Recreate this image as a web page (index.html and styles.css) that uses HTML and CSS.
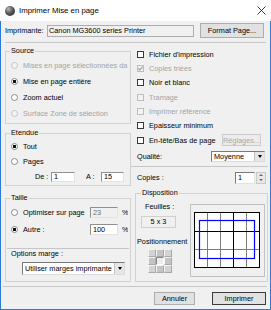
FILE: index.html
```html
<!DOCTYPE html>
<html lang="fr">
<head>
    <meta charset="UTF-8">
    <title>Imprimer Mise en page</title>
    <link rel="stylesheet" href="styles.css">
</head>
<body>
    <div class="window">
        <div class="titlebar">
            <span class="app-icon"></span>
            <span class="title">Imprimer Mise en page</span>
            <svg class="close" width="9" height="9" viewBox="0 0 9 9">
                <path d="M0.5 0.5 L8.5 8.5 M8.5 0.5 L0.5 8.5" stroke="#222" stroke-width="0.9" fill="none"/>
            </svg>
        </div>

        <div class="content">
            <div class="printer-row">
                <span class="printer-label">Imprimante:</span>
                <div class="field printer-name">Canon MG3600 series Printer</div>
                <button class="btn format-btn">Format Page...</button>
            </div>

            <div class="sep top-sep"></div>

            <div class="main">
                <div class="col-left">
                    <fieldset class="group source">
                        <legend>Source</legend>
                        <div class="opt disabled"><span class="radio"></span>Mises en page sélectionnées da</div>
                        <div class="opt"><span class="radio on"></span>Mise en page entière</div>
                        <div class="opt"><span class="radio"></span>Zoom actuel</div>
                        <div class="opt disabled"><span class="radio"></span>Surface Zone de sélection</div>
                    </fieldset>

                    <fieldset class="group range">
                        <legend>Etendue</legend>
                        <div class="opt"><span class="radio on"></span>Tout</div>
                        <div class="opt"><span class="radio"></span>Pages</div>
                        <div class="range-row">
                            <span class="range-label">De :</span>
                            <div class="field input from-input">1</div>
                            <span class="range-label to-label">A :</span>
                            <div class="field input to-input">15</div>
                        </div>
                    </fieldset>

                    <fieldset class="group size">
                        <legend>Taille</legend>
                        <div class="opt size-row">
                            <span class="radio"></span>
                            <span class="size-label">Optimiser sur page</span>
                            <div class="field input pct-input disabled-input">23</div>
                            <span class="pct">%</span>
                        </div>
                        <div class="opt size-row">
                            <span class="radio on"></span>
                            <span class="size-label">Autre :</span>
                            <div class="field input pct-input">100</div>
                            <span class="pct">%</span>
                        </div>
                        <div class="sep inner-sep"></div>
                        <div class="margin-label">Options marge :</div>
                        <div class="dropdown margin-select">
                            <span class="dropdown-text">Utiliser marges imprimante</span>
                            <span class="dropdown-btn"><span class="arrow-down"></span></span>
                        </div>
                    </fieldset>
                </div>

                <div class="col-right">
                    <div class="check-row"><span class="check"></span>Fichier d'impression</div>
                    <div class="check-row disabled">
                        <span class="check">
                            <svg width="5" height="5" viewBox="0 0 5 5"><path d="M0.3 2.4 L1.8 3.9 L4.7 0.8" stroke="#9a9a9a" stroke-width="1.1" fill="none"/></svg>
                        </span>
                        <span>Copies triées</span>
                    </div>
                    <div class="check-row"><span class="check"></span>Noir et blanc</div>
                    <div class="check-row disabled"><span class="check"></span>Tramage</div>
                    <div class="check-row disabled"><span class="check"></span>Imprimer référence</div>
                    <div class="check-row"><span class="check"></span>Epaisseur minimum</div>
                    <div class="check-row">
                        <span class="check"></span>En-tête/Bas de page
                        <button class="btn settings-btn" disabled>Réglages...</button>
                    </div>

                    <div class="quality-row">
                        <span>Qualité:</span>
                        <div class="dropdown quality-select">
                            <span class="dropdown-text">Moyenne</span>
                            <span class="dropdown-btn"><span class="arrow-down"></span></span>
                        </div>
                    </div>

                    <div class="sep right-sep"></div>

                    <div class="copies-row">
                        <span>Copies :</span>
                        <div class="spin">
                            <div class="spin-value">1</div>
                            <div class="spin-btns">
                                <span class="spin-half"><span class="arrow-up"></span></span>
                                <span class="spin-half"><span class="arrow-down small"></span></span>
                            </div>
                        </div>
                    </div>

                    <fieldset class="group disposition">
                        <legend>Disposition</legend>
                        <div class="dispo-body">
                            <div class="dispo-left">
                                <div class="sheets-label">Feuilles :</div>
                                <div class="sheets-box">5 x 3</div>
                                <div class="pos-label">Positionnement</div>
                                <div class="pos-grid">
                                    <span></span><span class="mid"></span><span></span>
                                    <span class="mid"></span><span class="center"></span><span class="mid"></span>
                                    <span></span><span class="mid"></span><span></span>
                                </div>
                            </div>
                            <div class="preview">
                                <svg width="66" height="56" viewBox="0 0 66 56">
                                    <rect x="0" y="0" width="66" height="56" fill="#fff"/>
                                    <path d="M13.5 0 V56 M26.5 0 V56 M52.5 0 V56 M0 37.5 H66" stroke="#7c7c7c" stroke-width="1"/>
                                    <path d="M39.5 0 V56 M0 19.5 H66" stroke="#000" stroke-width="1"/>
                                    <rect x="5.5" y="8.5" width="55" height="38" fill="none" stroke="#0000ff" stroke-width="1.2"/>
                                    <rect x="0.5" y="0.5" width="65" height="55" fill="none" stroke="#000" stroke-width="1"/>
                                </svg>
                            </div>
                        </div>
                    </fieldset>
                </div>
            </div>

            <div class="sep bottom-sep"></div>

            <div class="actions">
                <button class="btn cancel-btn">Annuler</button>
                <button class="btn print-btn">Imprimer</button>
            </div>
        </div>
    </div>
</body>
</html>
```

FILE: styles.css
```css
* {
    box-sizing: border-box;
}
body {
    margin: 0;
    font-family: "Liberation Sans", Arial, sans-serif;
    font-size: 7.3px;
    color: #000;
}
.window {
    width: 271px;
    height: 310px;
    background-color: #f0f0f0;
    border: 1px solid #2b7bd6;
    border-top: none;
    display: flex;
    flex-direction: column;
}
.titlebar {
    height: 21px;
    margin: 0 -1px;
    background-color: #fff;
    display: flex;
    align-items: center;
    padding: 0 5px;
}
.app-icon {
    width: 10px;
    height: 10px;
    border-radius: 50%;
    background: radial-gradient(circle at 35% 30%, #b8b8b8 0, #5a5a5a 45%, #1e1e1e 100%);
    margin-right: 4px;
}
.title {
    font-size: 7.8px;
}
.close {
    margin-left: auto;
}
.content {
    flex: 1;
    display: flex;
    flex-direction: column;
}
.printer-row {
    display: flex;
    align-items: center;
    height: 15px;
    margin: 2px 0 0 4px;
}
.printer-label {
    width: 42px;
}
.field {
    background-color: #fff;
    border: 1px solid;
    border-color: #8f8f8f #e3e3e3 #e3e3e3 #8f8f8f;
    white-space: nowrap;
    overflow: hidden;
}
.printer-name {
    width: 147px;
    height: 12px;
    line-height: 10px;
    padding-left: 1px;
    background-color: #f0f0f0;
    border-color: #adadad;
}
.btn {
    font-family: inherit;
    font-size: inherit;
    color: #000;
    background-color: #e1e1e1;
    border: 1px solid #adadad;
    padding: 0;
    border-radius: 0;
}
.format-btn {
    width: 64px;
    height: 15px;
    margin-left: 6px;
}
.sep {
    height: 0;
    border-top: 1px solid #c6c6c6;
}
.top-sep {
    margin: 4px 4px 0 4px;
}
.main {
    display: grid;
    grid-template-columns: 126px 133px;
    column-gap: 4px;
    margin: 3px 0 0 4px;
}
.col-left {
    display: flex;
    flex-direction: column;
}
.group {
    margin: 0;
    padding: 0 2px 0 5px;
    border: 1px solid #d2d2d2;
    min-width: 0;
}
.group legend {
    padding: 0 1px;
    margin-left: -1px;
    line-height: 10px;
    height: 10px;
}
.opt {
    display: flex;
    align-items: center;
    white-space: nowrap;
    overflow: hidden;
}
.radio {
    flex: none;
    width: 7px;
    height: 7px;
    border-radius: 50%;
    border: 1px solid #8a8a8a;
    background-color: #fff;
    margin-right: 5px;
}
.radio.on {
    background: radial-gradient(circle, #111 0, #111 1.4px, #fff 1.9px);
}
.disabled {
    color: #a3a3a3;
}
.disabled .radio {
    border-color: #c4c4c4;
    background-color: #f4f4f4;
}
.source {
    padding-top: 1px;
    padding-bottom: 2px;
}
.source .opt {
    height: 16px;
}
.range {
    margin-top: 4px;
    padding-top: 1px;
    padding-bottom: 1px;
}
.range .opt {
    height: 15px;
}
.range-row {
    display: flex;
    align-items: center;
    height: 15px;
    padding-left: 24px;
}
.range-label {
    width: 16px;
}
.to-label {
    margin-left: 11px;
    width: 15px;
}
.input {
    height: 10px;
    line-height: 8px;
    padding-left: 2px;
}
.from-input {
    width: 24px;
}
.to-input {
    width: 23px;
}
.size {
    margin-top: 7px;
    padding-top: 1px;
    padding-bottom: 6px;
}
.size-row {
    height: 17px;
}
.size-label {
    flex: 1;
}
.pct-input {
    width: 28px;
    height: 11px;
    line-height: 9px;
}
.disabled-input {
    background-color: #f0f0f0;
    color: #6d6d6d;
}
.pct {
    width: 6px;
    margin-left: 4px;
}
.inner-sep {
    margin: 10px -1px 0 -4px;
}
.margin-label {
    height: 9px;
    line-height: 9px;
}
.dropdown {
    display: flex;
    background-color: #fff;
    border: 1px solid;
    border-color: #7a7a7a #dcdcdc #dcdcdc #7a7a7a;
}
.dropdown-text {
    flex: 1;
    padding-left: 2px;
    white-space: nowrap;
    overflow: hidden;
}
.dropdown-btn {
    width: 10px;
    display: flex;
    align-items: center;
    justify-content: center;
    background-color: #e6e6e6;
    border-left: 1px solid #c0c0c0;
}
.arrow-down {
    width: 0;
    height: 0;
    border-left: 2.5px solid transparent;
    border-right: 2.5px solid transparent;
    border-top: 3px solid #000;
}
.arrow-up {
    width: 0;
    height: 0;
    border-left: 2px solid transparent;
    border-right: 2px solid transparent;
    border-bottom: 2.5px solid #6a6a6a;
}
.arrow-down.small {
    border-left-width: 2px;
    border-right-width: 2px;
    border-top: 2.5px solid #6a6a6a;
}
.margin-select {
    margin: 4px 0 0 11px;
    width: 103px;
    height: 13px;
    line-height: 11px;
}
.col-right {
    display: flex;
    flex-direction: column;
    padding-top: 1px;
}
.check-row {
    display: flex;
    align-items: center;
    height: 14.33px;
    padding-left: 2px;
    white-space: nowrap;
}
.check {
    flex: none;
    width: 7px;
    height: 7px;
    border: 1px solid #3a3a3a;
    background-color: #fff;
    margin-right: 5px;
    display: flex;
    align-items: center;
    justify-content: center;
    overflow: hidden;
}
.check svg {
    display: block;
}
.disabled .check {
    border-color: #bdbdbd;
    background-color: #f3f3f3;
}
.settings-btn {
    margin-left: auto;
    margin-right: 7px;
    width: 39px;
    height: 12px;
    color: #a8a8a8;
    background-color: #ececec;
    border-color: #cccccc;
}
.quality-row {
    display: flex;
    align-items: center;
    height: 19px;
    padding-left: 2px;
}
.quality-select {
    margin-left: auto;
    margin-right: 3px;
    width: 54px;
    height: 11px;
    line-height: 9px;
}
.right-sep {
    margin-left: -4px;
}
.copies-row {
    display: flex;
    align-items: center;
    height: 15px;
    margin-top: 3px;
    padding-left: 2px;
}
.spin {
    display: flex;
    margin-left: auto;
    margin-right: 2px;
    width: 31px;
    height: 12px;
}
.spin-value {
    flex: 1;
    background-color: #fff;
    border: 1px solid;
    border-color: #7a7a7a #e3e3e3 #e3e3e3 #7a7a7a;
    line-height: 10px;
    padding-left: 2px;
}
.spin-btns {
    width: 10px;
    display: flex;
    flex-direction: column;
    margin-left: 1px;
    border: 1px solid #c8c8c8;
    background-color: #e8e8e8;
}
.spin-half {
    flex: 1;
    display: flex;
    align-items: center;
    justify-content: center;
}
.disposition {
    flex: 1;
    margin-top: 3px;
    padding: 0 2px 0 1px;
}
.disposition legend {
    margin-left: 4px;
}
.dispo-body {
    display: flex;
}
.dispo-left {
    width: 52px;
    display: flex;
    flex-direction: column;
    align-items: flex-start;
}
.sheets-label {
    margin: 4px 0 0 8px;
    line-height: 9px;
}
.sheets-box {
    margin: 5px 0 0 4px;
    width: 35px;
    height: 12px;
    line-height: 10px;
    text-align: center;
    border: 1px solid #cfcfcf;
    background-color: #f0f0f0;
}
.pos-label {
    margin-top: 9px;
    line-height: 9px;
    white-space: nowrap;
}
.pos-grid {
    margin: 3px 0 0 11px;
    display: grid;
    grid-template-columns: repeat(3, 8px);
    grid-template-rows: repeat(3, 8px);
    width: 24px;
    height: 24px;
}
.pos-grid span {
    background-color: #d3d3d3;
    border: 1px solid;
    border-color: #f4f4f4 #a8a8a8 #a8a8a8 #f4f4f4;
}
.pos-grid span.mid {
    background-color: #c4c4c4;
}
.pos-grid span.center {
    background-color: #ececec;
    border-color: #8a8a8a #fff #fff #8a8a8a;
}
.preview {
    margin: 6px 0 0 1px;
    width: 75px;
    height: 73px;
    padding: 7px 0 0 3px;
    border: 1px solid #c2c2c2;
    background-color: #f0f0f0;
}
.preview svg {
    display: block;
}
.bottom-sep {
    margin: 4px 3px 0 2px;
}
.actions {
    display: flex;
    justify-content: flex-end;
    gap: 17px;
    margin-top: 5px;
    padding-right: 4px;
}
.cancel-btn {
    width: 41px;
    height: 13px;
}
.print-btn {
    width: 54px;
    height: 13px;
    border-color: #3c3c3c;
}
```
